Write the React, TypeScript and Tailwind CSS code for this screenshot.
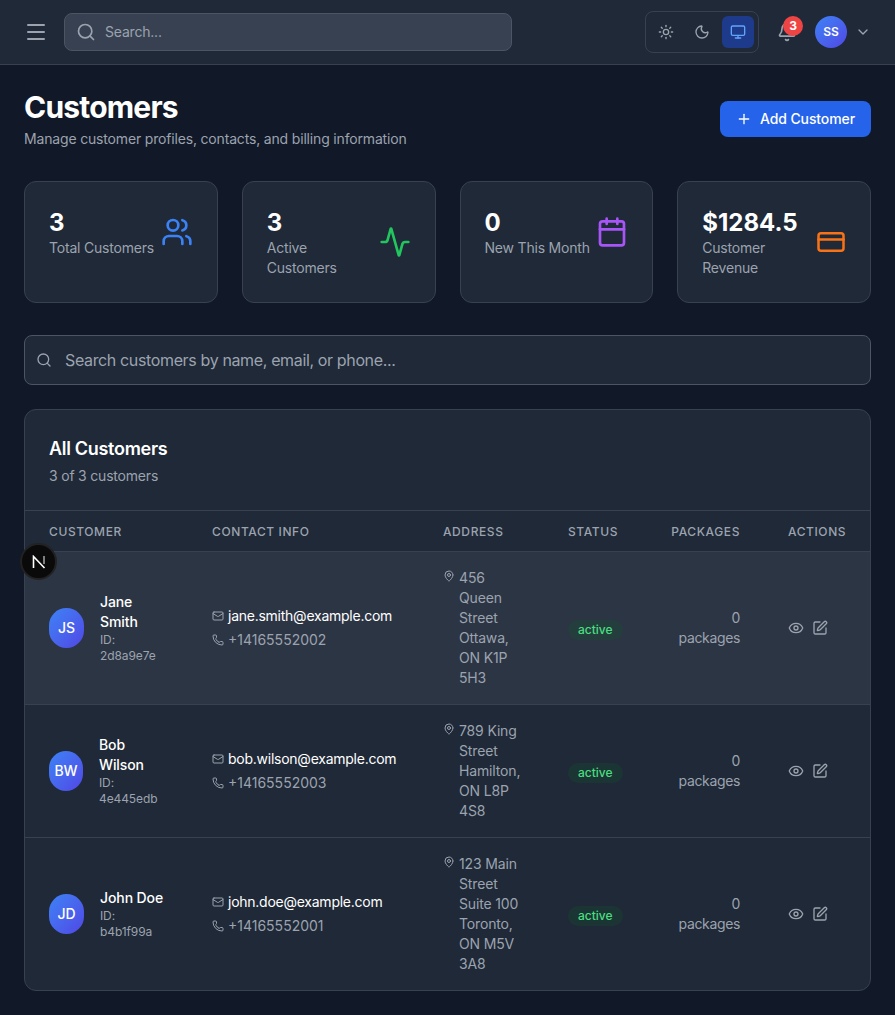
import {
  Activity,
  Bell,
  Calendar,
  ChevronDown,
  CreditCard,
  Eye,
  Mail,
  MapPin,
  Menu,
  Monitor,
  Moon,
  Phone,
  Plus,
  Search,
  SquarePen,
  Sun,
  Users,
} from "lucide-react";

const stats = [
  { value: "3", label: "Total Customers", icon: Users, color: "h-8 w-8 text-[#3b82f6]" },
  { value: "3", label: "Active Customers", icon: Activity, color: "h-8 w-8 text-[#22c55e]" },
  { value: "0", label: "New This Month", icon: Calendar, color: "h-8 w-8 text-[#a855f7]" },
  { value: "$1284.5", label: "Customer Revenue", icon: CreditCard, color: "h-[30px] w-[30px] text-[#f97316]" },
];

const customers = [
  {
    initials: "JS",
    name: "Jane Smith",
    id: "2d8a9e7e",
    email: "jane.smith@example.com",
    phone: "+14165552002",
    address: "456 Queen Street Ottawa, ON K1P 5H3",
    avatarWidth: "w-[35px]",
    rowBg: "bg-[#2c3544]",
  },
  {
    initials: "BW",
    name: "Bob Wilson",
    id: "4e445edb",
    email: "bob.wilson@example.com",
    phone: "+14165552003",
    address: "789 King Street Hamilton, ON L8P 4S8",
    avatarWidth: "w-[34px]",
    rowBg: "",
  },
  {
    initials: "JD",
    name: "John Doe",
    id: "b4b1f99a",
    email: "john.doe@example.com",
    phone: "+14165552001",
    address: "123 Main Street Suite 100 Toronto, ON M5V 3A8",
    avatarWidth: "w-[35px]",
    rowBg: "",
  },
];

function TopBar() {
  return (
    <header className="flex h-[65px] items-center justify-between border-b border-[#374151] bg-[#1f2937] px-6">
      <div className="flex items-center gap-4">
        <Menu className="h-6 w-6 text-[#9ca3af]" />
        <div className="flex h-[38px] w-[448px] items-center gap-[9px] rounded-lg border border-[#4b5563] bg-[#374151] pl-[11px]">
          <Search className="h-5 w-5 text-[#9ca3af]" />
          <span className="text-sm tracking-[-0.2px] text-[#9ca3af]">Search...</span>
        </div>
      </div>
      <div className="flex items-center">
        <div className="flex gap-1 rounded-lg border border-[#374151] p-1">
          <button className="flex h-8 w-8 items-center justify-center rounded-md text-[#9ca3af]">
            <Sun className="h-4 w-4" />
          </button>
          <button className="flex h-8 w-8 items-center justify-center rounded-md text-[#9ca3af]">
            <Moon className="h-4 w-4" />
          </button>
          <button className="flex h-8 w-8 items-center justify-center rounded-md bg-[#1e3a8a] text-[#60a5fa]">
            <Monitor className="h-4 w-4" />
          </button>
        </div>
        <div className="relative ml-[10px] flex h-9 w-9 items-center justify-center text-[#9ca3af]">
          <Bell className="h-5 w-5" />
          <span className="absolute right-[2px] top-[2px] flex h-5 w-5 items-center justify-center rounded-full bg-[#ef4444] text-xs font-bold text-white">
            3
          </span>
        </div>
        <div className="ml-[10px] flex h-8 w-8 items-center justify-center rounded-full bg-gradient-to-br from-[#3b82f6] to-[#4f46e5] text-xs font-semibold text-white">
          SS
        </div>
        <ChevronDown className="ml-2 h-4 w-4 text-[#9ca3af]" />
      </div>
    </header>
  );
}

function StatCard({ value, label, icon: Icon, color }: (typeof stats)[number]) {
  return (
    <div className="rounded-xl border border-[#374151] bg-[#1f2937] p-6">
      <div className="flex items-center justify-between">
        <div>
          <div className="h-8 text-2xl leading-[34px] font-bold text-white">{value}</div>
          <div className="text-sm tracking-[-0.2px] text-[#9ca3af]">{label}</div>
        </div>
        <Icon className={`shrink-0 ${color}`} />
      </div>
    </div>
  );
}

function CustomerRow({ customer }: { customer: (typeof customers)[number] }) {
  return (
    <tr className={`border-t border-[#374151] ${customer.rowBg}`}>
      <td className="py-4 pl-6 pr-6 align-middle">
        <div className="flex items-center gap-4">
          <div
            className={`flex h-10 shrink-0 items-center justify-center rounded-full bg-gradient-to-br from-[#3b82f6] to-[#4f46e5] text-sm font-medium text-white ${customer.avatarWidth}`}
          >
            {customer.initials}
          </div>
          <div className="min-w-0">
            <div className="text-sm font-medium tracking-[-0.1px] text-white">{customer.name}</div>
            <div className="text-xs tracking-[-0.1px] text-[#9ca3af]">ID: {customer.id}</div>
          </div>
        </div>
      </td>
      <td className="px-6 py-4 align-middle">
        <div className="flex items-center gap-1 text-sm tracking-[-0.25px] text-white">
          <Mail className="h-3 w-3 shrink-0 text-[#9ca3af]" />
          {customer.email}
        </div>
        <div className="mt-1 flex items-center gap-1 text-sm text-[#9ca3af]">
          <Phone className="h-3 w-3 shrink-0" />
          {customer.phone}
        </div>
      </td>
      <td className="px-6 py-4 align-middle">
        <div className="flex items-start gap-1 text-sm tracking-[-0.15px] text-[#9ca3af]">
          <MapPin className="mt-0.5 h-3 w-3 shrink-0" />
          <span>{customer.address}</span>
        </div>
      </td>
      <td className="px-6 py-4 align-middle">
        <span className="inline-flex rounded-full bg-[#14532d]/30 px-2.5 py-0.5 text-xs font-medium text-[#4ade80]">
          active
        </span>
      </td>
      <td className="px-6 py-4 text-right align-middle text-sm tracking-[-0.35px] text-[#9ca3af]">0 packages</td>
      <td className="px-6 py-4 align-middle">
        <div className="flex items-center gap-2 text-[#9ca3af]">
          <Eye className="h-4 w-4" />
          <SquarePen className="h-4 w-4" />
        </div>
      </td>
    </tr>
  );
}

function CustomersTable() {
  return (
    <div className="overflow-hidden rounded-xl border border-[#374151] bg-[#1f2937]">
      <div className="p-6">
        <h2 className="text-lg leading-[30px] font-semibold tracking-[-0.3px] text-white">All Customers</h2>
        <p className="mt-0.5 text-sm tracking-[-0.2px] text-[#9ca3af]">3 of 3 customers</p>
      </div>
      <table className="w-full table-fixed border-t border-[#374151]">
        <colgroup>
          <col className="w-[163px]" />
          <col className="w-[231px]" />
          <col className="w-[125px]" />
          <col className="w-[103px]" />
          <col className="w-[117px]" />
          <col />
        </colgroup>
        <thead>
          <tr className="text-xs font-medium uppercase tracking-wider text-[#9ca3af]">
            <th className="px-6 pb-[11px] pt-[13px] text-left font-medium">Customer</th>
            <th className="px-6 pb-[11px] pt-[13px] text-left font-medium">Contact Info</th>
            <th className="px-6 pb-[11px] pt-[13px] text-left font-medium">Address</th>
            <th className="px-6 pb-[11px] pt-[13px] text-left font-medium">Status</th>
            <th className="px-6 pb-[11px] pt-[13px] text-right font-medium">Packages</th>
            <th className="whitespace-nowrap pb-[11px] pl-6 pt-[13px] text-left font-medium">Actions</th>
          </tr>
        </thead>
        <tbody>
          {customers.map((customer) => (
            <CustomerRow key={customer.id} customer={customer} />
          ))}
        </tbody>
      </table>
    </div>
  );
}

function App() {
  return (
    <div className="min-h-screen bg-[#111827] font-['Inter',sans-serif]">
      <TopBar />
      <main className="p-6">
        <div className="mb-8 flex items-center justify-between">
          <div>
            <h1 className="text-3xl font-bold tracking-[-0.8px] text-white">Customers</h1>
            <p className="mt-1 text-sm tracking-[-0.17px] text-[#9ca3af]">
              Manage customer profiles, contacts, and billing information
            </p>
          </div>
          <button className="flex h-9 items-center gap-2 rounded-lg bg-[#2563eb] px-4 text-sm font-medium tracking-[-0.1px] text-white">
            <Plus className="h-4 w-4" />
            Add Customer
          </button>
        </div>

        <div className="mb-8 grid grid-cols-4 gap-6">
          {stats.map((stat) => (
            <StatCard key={stat.label} {...stat} />
          ))}
        </div>

        <div className="relative mb-6">
          <Search className="absolute left-3 top-[17px] h-4 w-4 text-[#9ca3af]" />
          <input
            placeholder="Search customers by name, email, or phone..."
            className="w-full rounded-lg border border-[#4b5563] bg-[#1f2937] py-3 pl-10 pr-4 text-base tracking-[-0.36px] text-white placeholder:text-[#9ca3af]"
          />
        </div>

        <CustomersTable />
      </main>

      {/* dev tools badge */}
      <div className="fixed left-[20px] top-[543px] flex h-[37px] w-[37px] items-center justify-center rounded-full border-2 border-[#222222] bg-[#0a0a0a]">
        <svg viewBox="0 0 14 14" className="h-[14px] w-[14px]" fill="none" stroke="white" strokeWidth="1.6">
          <path d="M1.5 13V1.5L12.5 13" />
          <path d="M12 1v8" strokeOpacity="0.6" />
        </svg>
      </div>
    </div>
  );
}

export default App;
